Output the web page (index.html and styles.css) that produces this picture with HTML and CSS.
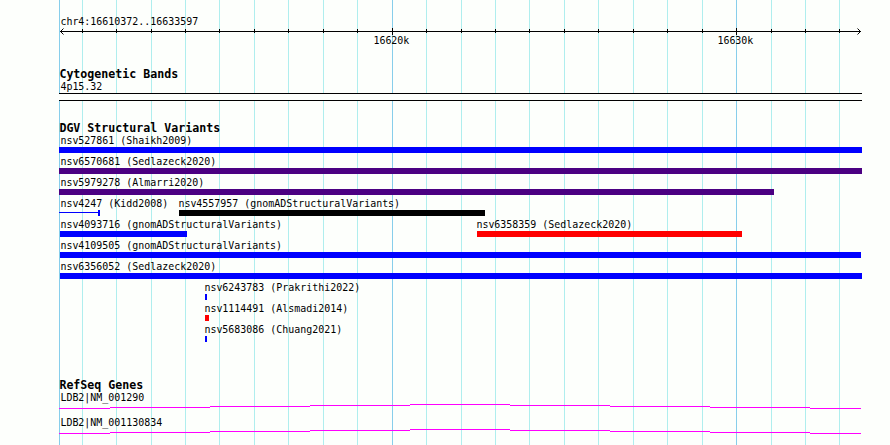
FILE: index.html
```html
<!DOCTYPE html>
<html lang="en">
<head>
  <meta charset="UTF-8">
  <title>chr4:16610372..16633597</title>
  <link rel="stylesheet" href="styles.css">
</head>
<body>
  <div class="panel">

    <!-- Vertical grid, one line per 1k -->
    <svg class="grid" width="803" height="445" viewBox="0 0 803 445">
      <path class="minor" d="M23.5 0V445M57.5 0V445M92.5 0V445M126.5 0V445M160.5 0V445M195.5 0V445M229.5 0V445M264.5 0V445M298.5 0V445M367.5 0V445M402.5 0V445M436.5 0V445M470.5 0V445M505.5 0V445M539.5 0V445M574.5 0V445M608.5 0V445M643.5 0V445M712.5 0V445M746.5 0V445M780.5 0V445"/>
      <path class="major" d="M.5 0V445M333.5 0V445M677.5 0V445"/>
    </svg>

    <!-- Ruler -->
    <div class="ruler">
      <div class="label">chr4:16610372..16633597</div>
      <svg class="scale" width="803" height="8" viewBox="0 0 803 8">
        <path d="M1 3.5H802M23.5 1V5M57.5 1V5M92.5 1V5M126.5 1V5M160.5 1V5M195.5 1V5M229.5 1V5M264.5 1V5M298.5 1V5M367.5 1V5M402.5 1V5M436.5 1V5M470.5 1V5M505.5 1V5M539.5 1V5M574.5 1V5M608.5 1V5M643.5 1V5M712.5 1V5M746.5 1V5M780.5 1V5M333.5 0V7M677.5 0V7"/>
        <path class="arrow" d="M4.5 .5L1.5 3.5L4.5 6.5M798.5 .5L801.5 3.5L798.5 6.5"/>
      </svg>
      <div class="row">
        <div class="label" style="margin-left: 313px">16620k</div>
        <div class="label" style="margin-left: 657px">16630k</div>
      </div>
    </div>

    <!-- Cytogenetic Bands -->
    <div class="track bands">
      <h2>Cytogenetic Bands</h2>
      <div class="label">4p15.32</div>
      <div class="band"></div>
    </div>

    <!-- Structural Variants -->
    <div class="track variants">
      <h2>DGV Structural Variants</h2>
      <div class="row">
        <div class="feature"><div class="label">nsv527861 (Shaikh2009)</div><div class="bar blue" style="width: 803px"></div></div>
      </div>
      <div class="row">
        <div class="feature"><div class="label">nsv6570681 (Sedlazeck2020)</div><div class="bar indigo" style="width: 803px"></div></div>
      </div>
      <div class="row">
        <div class="feature"><div class="label">nsv5979278 (Almarri2020)</div><div class="bar indigo" style="width: 715px"></div></div>
      </div>
      <div class="row">
        <div class="feature"><div class="label">nsv4247 (Kidd2008)</div><div class="bar range" style="width: 41px"></div></div>
        <div class="feature inset" style="margin-left: 120px"><div class="label">nsv4557957 (gnomADStructuralVariants)</div><div class="bar black" style="width: 306px"></div></div>
      </div>
      <div class="row">
        <div class="feature inset" style="margin-left: 1px"><div class="label first">nsv4093716 (gnomADStructuralVariants)</div><div class="bar blue" style="width: 127px"></div></div>
        <div class="feature inset" style="margin-left: 418px"><div class="label">nsv6358359 (Sedlazeck2020)</div><div class="bar red" style="width: 265px"></div></div>
      </div>
      <div class="row">
        <div class="feature inset" style="margin-left: 1px"><div class="label first">nsv4109505 (gnomADStructuralVariants)</div><div class="bar blue" style="width: 801px"></div></div>
      </div>
      <div class="row">
        <div class="feature inset" style="margin-left: 1px"><div class="label first">nsv6356052 (Sedlazeck2020)</div><div class="bar blue" style="width: 802px"></div></div>
      </div>
      <div class="row">
        <div class="feature inset" style="margin-left: 146px"><div class="label">nsv6243783 (Prakrithi2022)</div><div class="bar blue" style="width: 2px"></div></div>
      </div>
      <div class="row">
        <div class="feature inset" style="margin-left: 146px"><div class="label">nsv1114491 (Alsmadi2014)</div><div class="bar red" style="width: 4px"></div></div>
      </div>
      <div class="row">
        <div class="feature inset" style="margin-left: 146px"><div class="label">nsv5683086 (Chuang2021)</div><div class="bar blue" style="width: 2px"></div></div>
      </div>
    </div>

    <!-- Genes -->
    <div class="track genes">
      <h2>RefSeq Genes</h2>
      <div class="gene">
        <div class="label">LDB2|NM_001290</div>
        <svg class="intron" width="803" height="5" viewBox="0 0 803 5">
          <path d="M0 4.5H51M51 3.5H151M151 2.5H251M251 1.5H351M351 .5H451M451 1.5H551M551 2.5H651M651 3.5H751M751 4.5H802"/>
        </svg>
      </div>
      <div class="gene">
        <div class="label">LDB2|NM_001130834</div>
        <svg class="intron" width="803" height="5" viewBox="0 0 803 5">
          <path d="M0 4.5H51M51 3.5H151M151 2.5H251M251 1.5H351M351 .5H451M451 1.5H551M551 2.5H651M651 3.5H751M751 4.5H802"/>
        </svg>
      </div>
    </div>

  </div>
</body>
</html>
```
FILE: styles.css
```css
body {
  margin: 0;
  background-color: #fdfffc;
  color: #000;
  font-family: "DejaVu Sans Mono", monospace;
  font-size: 9.966px;
  line-height: 12px;
}

.panel {
  position: relative;
  z-index: 0;
  box-sizing: border-box;
  width: 803px;
  height: 445px;
  margin-left: 59px;
  padding-top: 16px;
  overflow: hidden;
}

svg {
  display: block;
  fill: none;
  shape-rendering: crispEdges;
}

/* Grid lines behind the tracks */
.grid {
  position: absolute;
  top: 0;
  left: 0;
  z-index: -1;
}

.minor {
  stroke: #afeeee;
}

.major {
  stroke: #87ceeb;
}

h2 {
  height: 12px;
  margin: 0;
  font-size: 11.627px;
  font-weight: bold;
  line-height: 10px;
  text-indent: 0.4px;
  white-space: nowrap;
}

.label {
  height: 12px;
  padding-left: 1px;
  text-indent: 0.4px;
  white-space: nowrap;
}

.row {
  display: grid;
}

.row > * {
  grid-area: 1 / 1;
}

/* Ruler */
.ruler {
  height: 53px;
}

.scale {
  stroke: #000;
}

.arrow {
  shape-rendering: auto;
}

.ruler .row {
  margin-top: -1px;
}

/* Bands */
.bands {
  height: 54px;
}

.band {
  box-sizing: border-box;
  height: 8px;
  border: solid #000;
  border-width: 1px 0;
  background-color: #fdfffc;
}

/* Variants */
.variants {
  height: 257px;
}

.variants .row {
  height: 21px;
}

.inset .label {
  margin-left: -1px;
  padding-left: 0;
}

.inset .first {
  margin-left: 0;
}

.bar {
  height: 6px;
}

.blue {
  background-color: #00f;
}

.indigo {
  background-color: #4b0082;
}

.black {
  background-color: #000;
}

.red {
  background-color: #f00;
}

.range {
  box-sizing: border-box;
  border-right: 2px solid #00f;
  background: linear-gradient(#00f, #00f) 0 2px / 100% 1px no-repeat;
}

/* Genes */
.gene {
  height: 25px;
}

.intron {
  stroke: #f0f;
}
```
